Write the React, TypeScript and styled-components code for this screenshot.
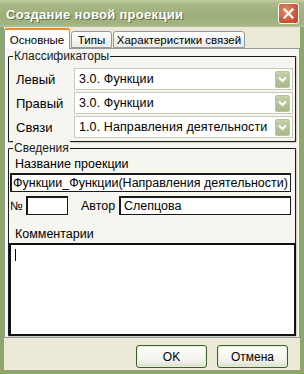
import React from 'react';
import styled, { createGlobalStyle } from 'styled-components';

const GlobalStyle = createGlobalStyle`
  html, body {
    margin: 0;
    padding: 0;
    background: #ffffff;
  }
  * {
    box-sizing: border-box;
  }
`;

const ChevronIcon = () => (
  <svg width="9" height="7" viewBox="0 0 9 7">
    <path d="M1 1.5 L4.5 5 L8 1.5" stroke="#ffffff" strokeWidth="2" fill="none" />
  </svg>
);

const CloseIcon = () => (
  <svg width="11" height="11" viewBox="0 0 11 11">
    <path d="M1.5 1.5 L9.5 9.5 M9.5 1.5 L1.5 9.5" stroke="#ffffff" strokeWidth="2.2" strokeLinecap="square" />
  </svg>
);

const Combo = ({ value }: { value: string }) => (
  <ComboBox>
    <ComboText>{value}</ComboText>
    <DropButton>
      <ChevronIcon />
    </DropButton>
  </ComboBox>
);

export default function App() {
  return (
    <>
      <GlobalStyle />
      <Window>
        <TitleBar>
          <Title>Создание новой проекции</Title>
          <CloseButton>
            <CloseIcon />
          </CloseButton>
        </TitleBar>
        <Body>
          <TabStrip>
            <Tab $active width={66}>Основные</Tab>
            <Tab width={41}>Типы</Tab>
            <Tab width={132}>Характеристики связей</Tab>
          </TabStrip>
          <TabPanel>
            <Group height={87}>
              <Legend>Классификаторы</Legend>
              <ComboRows>
                <ComboRow>
                  <RowLabel>Левый</RowLabel>
                  <Combo value="3.0. Функции" />
                </ComboRow>
                <ComboRow>
                  <RowLabel>Правый</RowLabel>
                  <Combo value="3.0. Функции" />
                </ComboRow>
                <ComboRow>
                  <RowLabel>Связи</RowLabel>
                  <Combo value="1.0. Направления деятельности" />
                </ComboRow>
              </ComboRows>
            </Group>
            <Group height={189}>
              <Legend>Сведения</Legend>
              <Details>
                <FieldLabel>Название проекции</FieldLabel>
                <TextInput>Функции_Функции(Направления деятельности)</TextInput>
                <InfoRow>
                  <NumberLabel>№</NumberLabel>
                  <NumberInput />
                  <AuthorLabel>Автор</AuthorLabel>
                  <AuthorInput>Слепцова</AuthorInput>
                </InfoRow>
                <FieldLabel>Комментарии</FieldLabel>
              </Details>
              <CommentArea>
                <Caret />
              </CommentArea>
            </Group>
          </TabPanel>
          <Footer>
            <Button>OK</Button>
            <Button>Отмена</Button>
          </Footer>
        </Body>
      </Window>
    </>
  );
}

const Window = styled.div`
  width: 304px;
  height: 374px;
  display: flex;
  flex-direction: column;
  background: #8ea56c;
  font-family: 'Liberation Sans', Arial, sans-serif;
  font-size: 12px;
  color: #000000;
`;

const TitleBar = styled.div`
  height: 27px;
  flex: none;
  display: flex;
  align-items: center;
  justify-content: space-between;
  padding: 2px 5px 0 6px;
  background: linear-gradient(#c3cfa4 0%, #a9b987 15%, #9cae79 60%, #a3b482 90%, #b4c296 100%);
`;

const Title = styled.div`
  font-family: 'Liberation Sans', Arial, sans-serif;
  font-weight: bold;
  font-size: 13px;
  letter-spacing: 0.3px;
  color: #ffffff;
  text-shadow: 1px 1px 0 #5f6e45;
`;

const CloseButton = styled.div`
  width: 21px;
  height: 21px;
  margin-top: -2px;
  border: 1px solid #ffffff;
  border-radius: 3px;
  background: radial-gradient(circle at 35% 35%, #e28a6c, #c9502f 70%, #b8442a);
  display: flex;
  align-items: center;
  justify-content: center;
`;

const Body = styled.div`
  flex: 1;
  margin: 0 4px 4px;
  background: #ece9d8;
  display: flex;
  flex-direction: column;
  padding-top: 1px;
`;

const TabStrip = styled.div`
  display: flex;
  align-items: flex-end;
  height: 20px;
  position: relative;
  z-index: 1;
`;

const Tab = styled.div<{ $active?: boolean; width: number }>`
  width: ${(p) => p.width}px;
  height: ${(p) => (p.$active ? 21 : 17)}px;
  margin-bottom: ${(p) => (p.$active ? -1 : 0)}px;
  margin-right: 1px;
  display: flex;
  align-items: center;
  justify-content: center;
  font-size: 11.5px;
  white-space: nowrap;
  background: ${(p) => (p.$active ? '#fcfcfb' : 'linear-gradient(#ffffff, #ecebe6)')};
  border: 1px solid #919b9c;
  border-bottom: ${(p) => (p.$active ? 'none' : '1px solid #919b9c')};
  border-top: ${(p) => (p.$active ? '2px solid #e68b2c' : '1px solid #919b9c')};
  border-radius: 3px 3px 0 0;
  padding-top: ${(p) => (p.$active ? 0 : 1)}px;
`;

const TabPanel = styled.div`
  height: 290px;
  background: #f6f5f0;
  border: 1px solid #919b9c;
  padding: 7px 2px 0 3px;
  display: flex;
  flex-direction: column;
  gap: 5px;
`;

const Group = styled.div<{ height: number }>`
  position: relative;
  height: ${(p) => p.height}px;
  border: 1px solid #1a1a1a;
  border-radius: 2px;
  border-color: #1a1a1a #d0d0bf #d0d0bf #1a1a1a;
  box-shadow: inset -1px -1px 0 #1a1a1a;
  display: flex;
  flex-direction: column;
`;

const Legend = styled.div`
  position: absolute;
  top: -8px;
  left: 4px;
  padding: 0 1px;
  background: #f6f5f0;
  line-height: 14px;
  color: #1a1a1a;
`;

const ComboRows = styled.div`
  display: flex;
  flex-direction: column;
  gap: 2px;
  padding: 11px 3px 0 7px;
`;

const ComboRow = styled.div`
  display: flex;
  align-items: center;
  height: 22px;
`;

const RowLabel = styled.div`
  width: 58px;
  font-size: 13px;
`;

const ComboBox = styled.div`
  flex: 1;
  height: 22px;
  background: #ffffff;
  border: 1px solid #c9cbbd;
  display: flex;
  align-items: center;
  padding: 0 2px 0 4px;
`;

const ComboText = styled.div`
  flex: 1;
  font-size: 12.5px;
  letter-spacing: 0.1px;
`;

const DropButton = styled.div`
  width: 15px;
  height: 17px;
  border-radius: 2px;
  background: linear-gradient(#c6d1a8, #a7b884);
  border: 1px solid #b8c59b;
  display: flex;
  align-items: center;
  justify-content: center;
`;

const Details = styled.div`
  display: flex;
  flex-direction: column;
  padding: 8px 5px 0 1px;
`;

const FieldLabel = styled.div`
  height: 14px;
  line-height: 14px;
  padding-left: 5px;
  font-size: 12.5px;
`;

const TextInput = styled.div`
  height: 19px;
  margin: 2px 0 4px;
  background: #ffffff;
  border: 1px solid #1a1a1a;
  border-width: 2px 1px 1px 2px;
  display: flex;
  align-items: center;
  padding-left: 1px;
  font-size: 12.5px;
  white-space: nowrap;
`;

const InfoRow = styled.div`
  display: flex;
  align-items: center;
  height: 19px;
  margin-bottom: 12px;
`;

const NumberLabel = styled.div`
  width: 16px;
  font-size: 12px;
`;

const NumberInput = styled(TextInput)`
  width: 42px;
  margin: 0;
`;

const AuthorLabel = styled.div`
  width: 51px;
  padding-left: 13px;
  font-size: 12.5px;
`;

const AuthorInput = styled(TextInput)`
  flex: 1;
  margin: 0;
  padding-left: 3px;
`;

const CommentArea = styled.div`
  flex: 1;
  margin: 2px 0 0 0;
  background: #ffffff;
  border: 2px solid #111111;
  padding: 4px 0 0 4px;
`;

const Caret = styled.div`
  width: 1px;
  height: 12px;
  background: #000000;
`;

const Footer = styled.div`
  flex: 1;
  display: flex;
  justify-content: flex-end;
  align-items: flex-start;
  gap: 10px;
  padding: 7px 12px 0 0;
`;

const Button = styled.div`
  width: 71px;
  height: 23px;
  border: 1px solid #37622a;
  border-radius: 3px;
  background: linear-gradient(#ffffff, #f3f2ea 70%, #dcdccf);
  box-shadow: inset 0 0 0 1px #e7ebd6;
  display: flex;
  align-items: center;
  justify-content: center;
  font-size: 12px;
`;
